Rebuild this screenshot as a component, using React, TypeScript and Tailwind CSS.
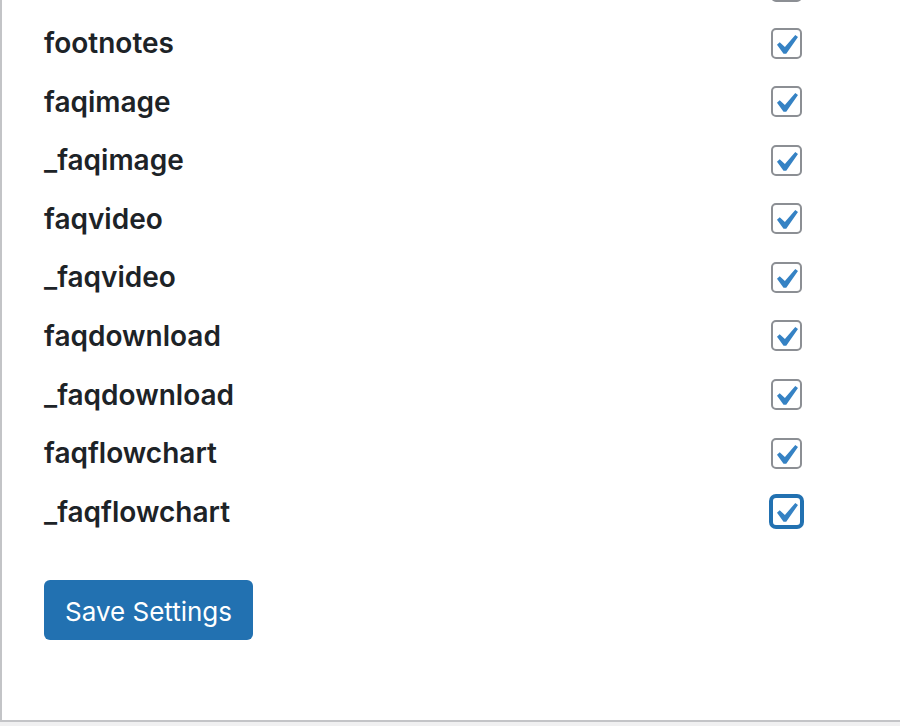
import React from "react";

const labels = [
  "",
  "footnotes",
  "faqimage",
  "_faqimage",
  "faqvideo",
  "_faqvideo",
  "faqdownload",
  "_faqdownload",
  "faqflowchart",
  "_faqflowchart",
];

function Check({ focused, first }: { focused?: boolean; first?: boolean }) {
  return (
    <div
      className={
        "relative w-[31px] h-[31px] rounded-[5px] bg-white " +
        (first ? "translate-y-[2px] " : "") +
        (focused
          ? "border-2 border-[#2271b1] ring-2 ring-[#2271b1]"
          : "border-2 border-[#8c8f94]")
      }
    >
      <svg
        viewBox="2.81 1.42 15.35 15.35"
        className="absolute left-[-2px] top-[-2px] w-[31px] h-[31px]"
      >
        <path
          fill="#3582c4"
          d="M14.83 4.89l1.34.94-5.81 8.38H9.02L5.78 9.67l1.34-1.25 2.57 2.4z"
        />
      </svg>
    </div>
  );
}

export default function App() {
  return (
    <div
      className="w-[900px] h-[726px] bg-[#f0f0f1] overflow-hidden"
      style={{ fontFamily: "Inter, 'Liberation Sans', sans-serif" }}
    >
      <div className="h-[722px] bg-white border-l-2 border-b-2 border-[#c3c4c7] overflow-hidden">
        <div className="pl-[42px] mt-[-44.9px]">
          {labels.map((l, i) => (
            <div key={i} className="flex items-center h-[58.6px]">
              <div className="w-[727px] text-[28px] font-semibold text-[#1d2327] leading-none">
                {l}
              </div>
              <Check focused={i === labels.length - 1} first={i === 0} />
            </div>
          ))}
          <button className="mt-[39px] h-[60px] w-[209px] pt-[3px] rounded-[6px] bg-[#2271b1] text-white text-[26px] leading-none">
            Save Settings
          </button>
        </div>
      </div>
    </div>
  );
}
